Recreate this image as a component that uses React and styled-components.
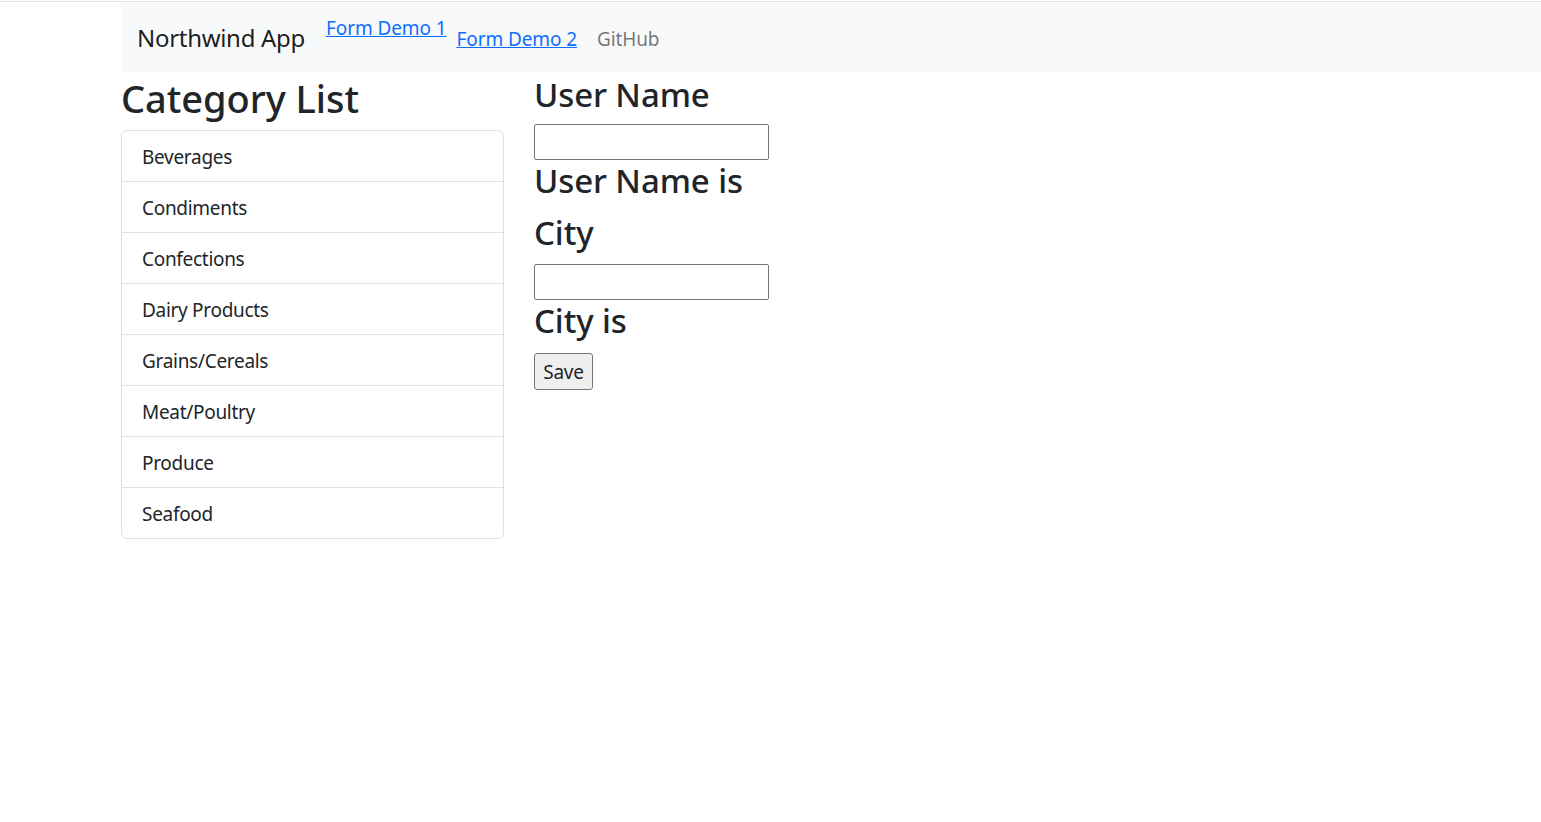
import React from 'react';
import styled, { createGlobalStyle } from 'styled-components';

const fontStack = `"Segoe UI", "Noto Sans", "Open Sans", sans-serif`;

const GlobalStyle = createGlobalStyle`
  html, body {
    padding: 0;
    background: #fff;
  }
  body {
    margin: 1px 0 0;
    font-family: ${fontStack};
    font-size: 19px;
    letter-spacing: -0.3px;
    line-height: 1.5;
    color: #212529;
    border-top: 1px solid #e3e3e3;
  }
  *, *::before, *::after {
    box-sizing: border-box;
  }
`;

const Page = styled.div`
  padding-left: 121px;
`;

const Navbar = styled.nav`
  display: flex;
  align-items: center;
  height: 70px;
  padding: 10px 16px;
  background: #f8f9fa;
`;

const Brand = styled.a`
  font-size: 24px;
  letter-spacing: -0.3px;
  line-height: 38px;
  padding: 7px 0 5px;
  margin-right: 21px;
  color: rgba(0, 0, 0, 0.9);
  text-decoration: none;
`;

const NavList = styled.div`
  display: flex;
  align-self: stretch;
  align-items: center;
`;

const PlainLink = styled.a`
  align-self: flex-start;
  line-height: 30px;
  margin-top: 1px;
  letter-spacing: -0.1px;
  color: #0d6efd;
  text-decoration: underline;
`;

const NavLink = styled.a`
  padding: 12px 10px 8px;
  line-height: 30px;
  letter-spacing: -0.1px;
  color: ${p => (p.$muted ? 'rgba(0, 0, 0, 0.55)' : '#0d6efd')};
  text-decoration: ${p => (p.$muted ? 'none' : 'underline')};
`;

const Row = styled.div`
  display: flex;
  align-items: flex-start;
  gap: 30px;
`;

const SideColumn = styled.div`
  width: 383px;
  flex-shrink: 0;
`;

const FormColumn = styled.div`
  display: flex;
  flex-direction: column;
  align-items: flex-start;
`;

const Title = styled.h2`
  margin: 0 0 10px;
  padding-top: 2px;
  height: 48px;
  font-size: 38px;
  letter-spacing: -0.05px;
  line-height: 48px;
  font-weight: 500;
`;

const Label = styled.h3`
  margin: 0 0 10px;
  font-size: 33px;
  letter-spacing: -0.1px;
  line-height: 42px;
  font-weight: 500;
  padding-top: ${p => (p.$first ? '2px' : '0')};
  height: 42px;
`;

const ListGroup = styled.ul`
  list-style: none;
  margin: 0;
  padding: 0;
  border: 1px solid #dee2e6;
  border-radius: 6px;
  overflow: hidden;
`;

const ListItem = styled.li`
  padding: 11px 20px 9px;
  line-height: 30px;
  color: #212529;
  & + & {
    border-top: 1px solid #dee2e6;
  }
`;

const TextInput = styled.input`
  width: 235px;
  height: 36px;
  margin: 0;
  border: 1px solid #767676;
  border-radius: 2px;
  background: #fff;
  font-size: 17px;
`;

const SaveButton = styled.button`
  width: 59px;
  height: 37px;
  padding: 0;
  margin-top: 1px;
  border: 1px solid #767676;
  border-radius: 3px;
  background: #efefef;
  color: #212529;
  font-family: ${fontStack};
  font-size: 19px;
  letter-spacing: -0.3px;
`;

const categories = [
  'Beverages',
  'Condiments',
  'Confections',
  'Dairy Products',
  'Grains/Cereals',
  'Meat/Poultry',
  'Produce',
  'Seafood',
];

export default function App() {
  return (
    <Page>
      <GlobalStyle />
      <Navbar>
        <Brand href="#">Northwind App</Brand>
        <NavList>
          <PlainLink href="#">Form Demo 1</PlainLink>
          <NavLink href="#">Form Demo 2</NavLink>
          <NavLink href="#" $muted>GitHub</NavLink>
        </NavList>
      </Navbar>
      <Row>
        <SideColumn>
          <Title>Category List</Title>
          <ListGroup>
            {categories.map(c => (
              <ListItem key={c}>{c}</ListItem>
            ))}
          </ListGroup>
        </SideColumn>
        <FormColumn>
          <Label $first>User Name</Label>
          <TextInput type="text" />
          <Label>User Name is </Label>
          <Label>City</Label>
          <TextInput type="text" />
          <Label>City is </Label>
          <SaveButton type="button">Save</SaveButton>
        </FormColumn>
      </Row>
    </Page>
  );
}
